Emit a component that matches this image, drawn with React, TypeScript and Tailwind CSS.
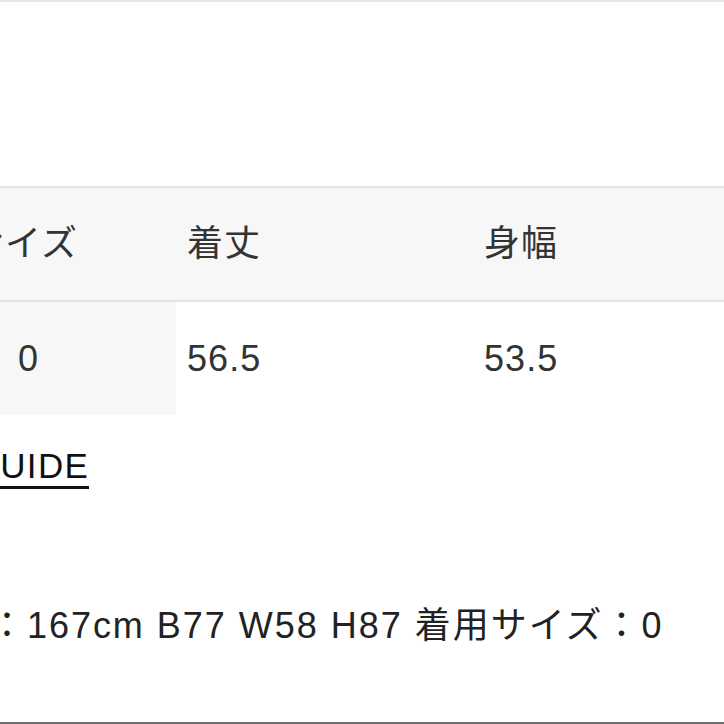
import React from "react";

const latin = {
  fontFamily:
    '"Liberation Sans", Arial, "Noto Sans CJK JP", sans-serif',
};

export default function App() {
  return (
    <div
      className="w-[724px] h-[724px] bg-white flex flex-col overflow-hidden text-[#333]"
      style={latin}
    >
      <div className="h-[2px] bg-[#e6e6e6]" />
      <div className="h-[184px]" />
      {/* table */}
      <div className="border-t-2 border-[#e4e4e4] bg-[#f7f7f7] h-[116px] border-b-2 flex items-center text-[36px] leading-[40px] tracking-[0.03em] whitespace-nowrap">
        <div className="w-[176px] shrink-0">
          <span className="block ml-[-32px]">サイズ</span>
        </div>
        <div className="w-[296px] shrink-0 pl-[11px]">着丈</div>
        <div className="pl-[12px]">身幅</div>
      </div>
      <div className="h-[113px] flex text-[36px] leading-[40px] tracking-[0.03em] whitespace-nowrap">
        <div className="w-[176px] shrink-0 bg-[#f7f7f7] flex items-center pl-[18px]">
          0
        </div>
        <div className="w-[296px] shrink-0 pl-[11px] flex items-center">56.5</div>
        <div className="pl-[12px] flex items-center">53.5</div>
      </div>
      {/* link */}
      <div className="mt-[31px] whitespace-nowrap text-[#111] text-[35px] leading-[40px] tracking-[0.04em]">
        <span className="inline-block ml-[-123px] border-b-[3px] border-[#111]">
          SIZE GUIDE
        </span>
      </div>
      {/* model info */}
      <div className="mt-[117px] whitespace-nowrap text-[#222] text-[36px] leading-[40px] tracking-[0.055em]">
        <span className="block ml-[-201px]">モデル身長：167cm B77 W58 H87 着用サイズ：0</span>
      </div>
      <div className="mt-auto h-[2px] bg-[#6e6e6e]" />
    </div>
  );
}
